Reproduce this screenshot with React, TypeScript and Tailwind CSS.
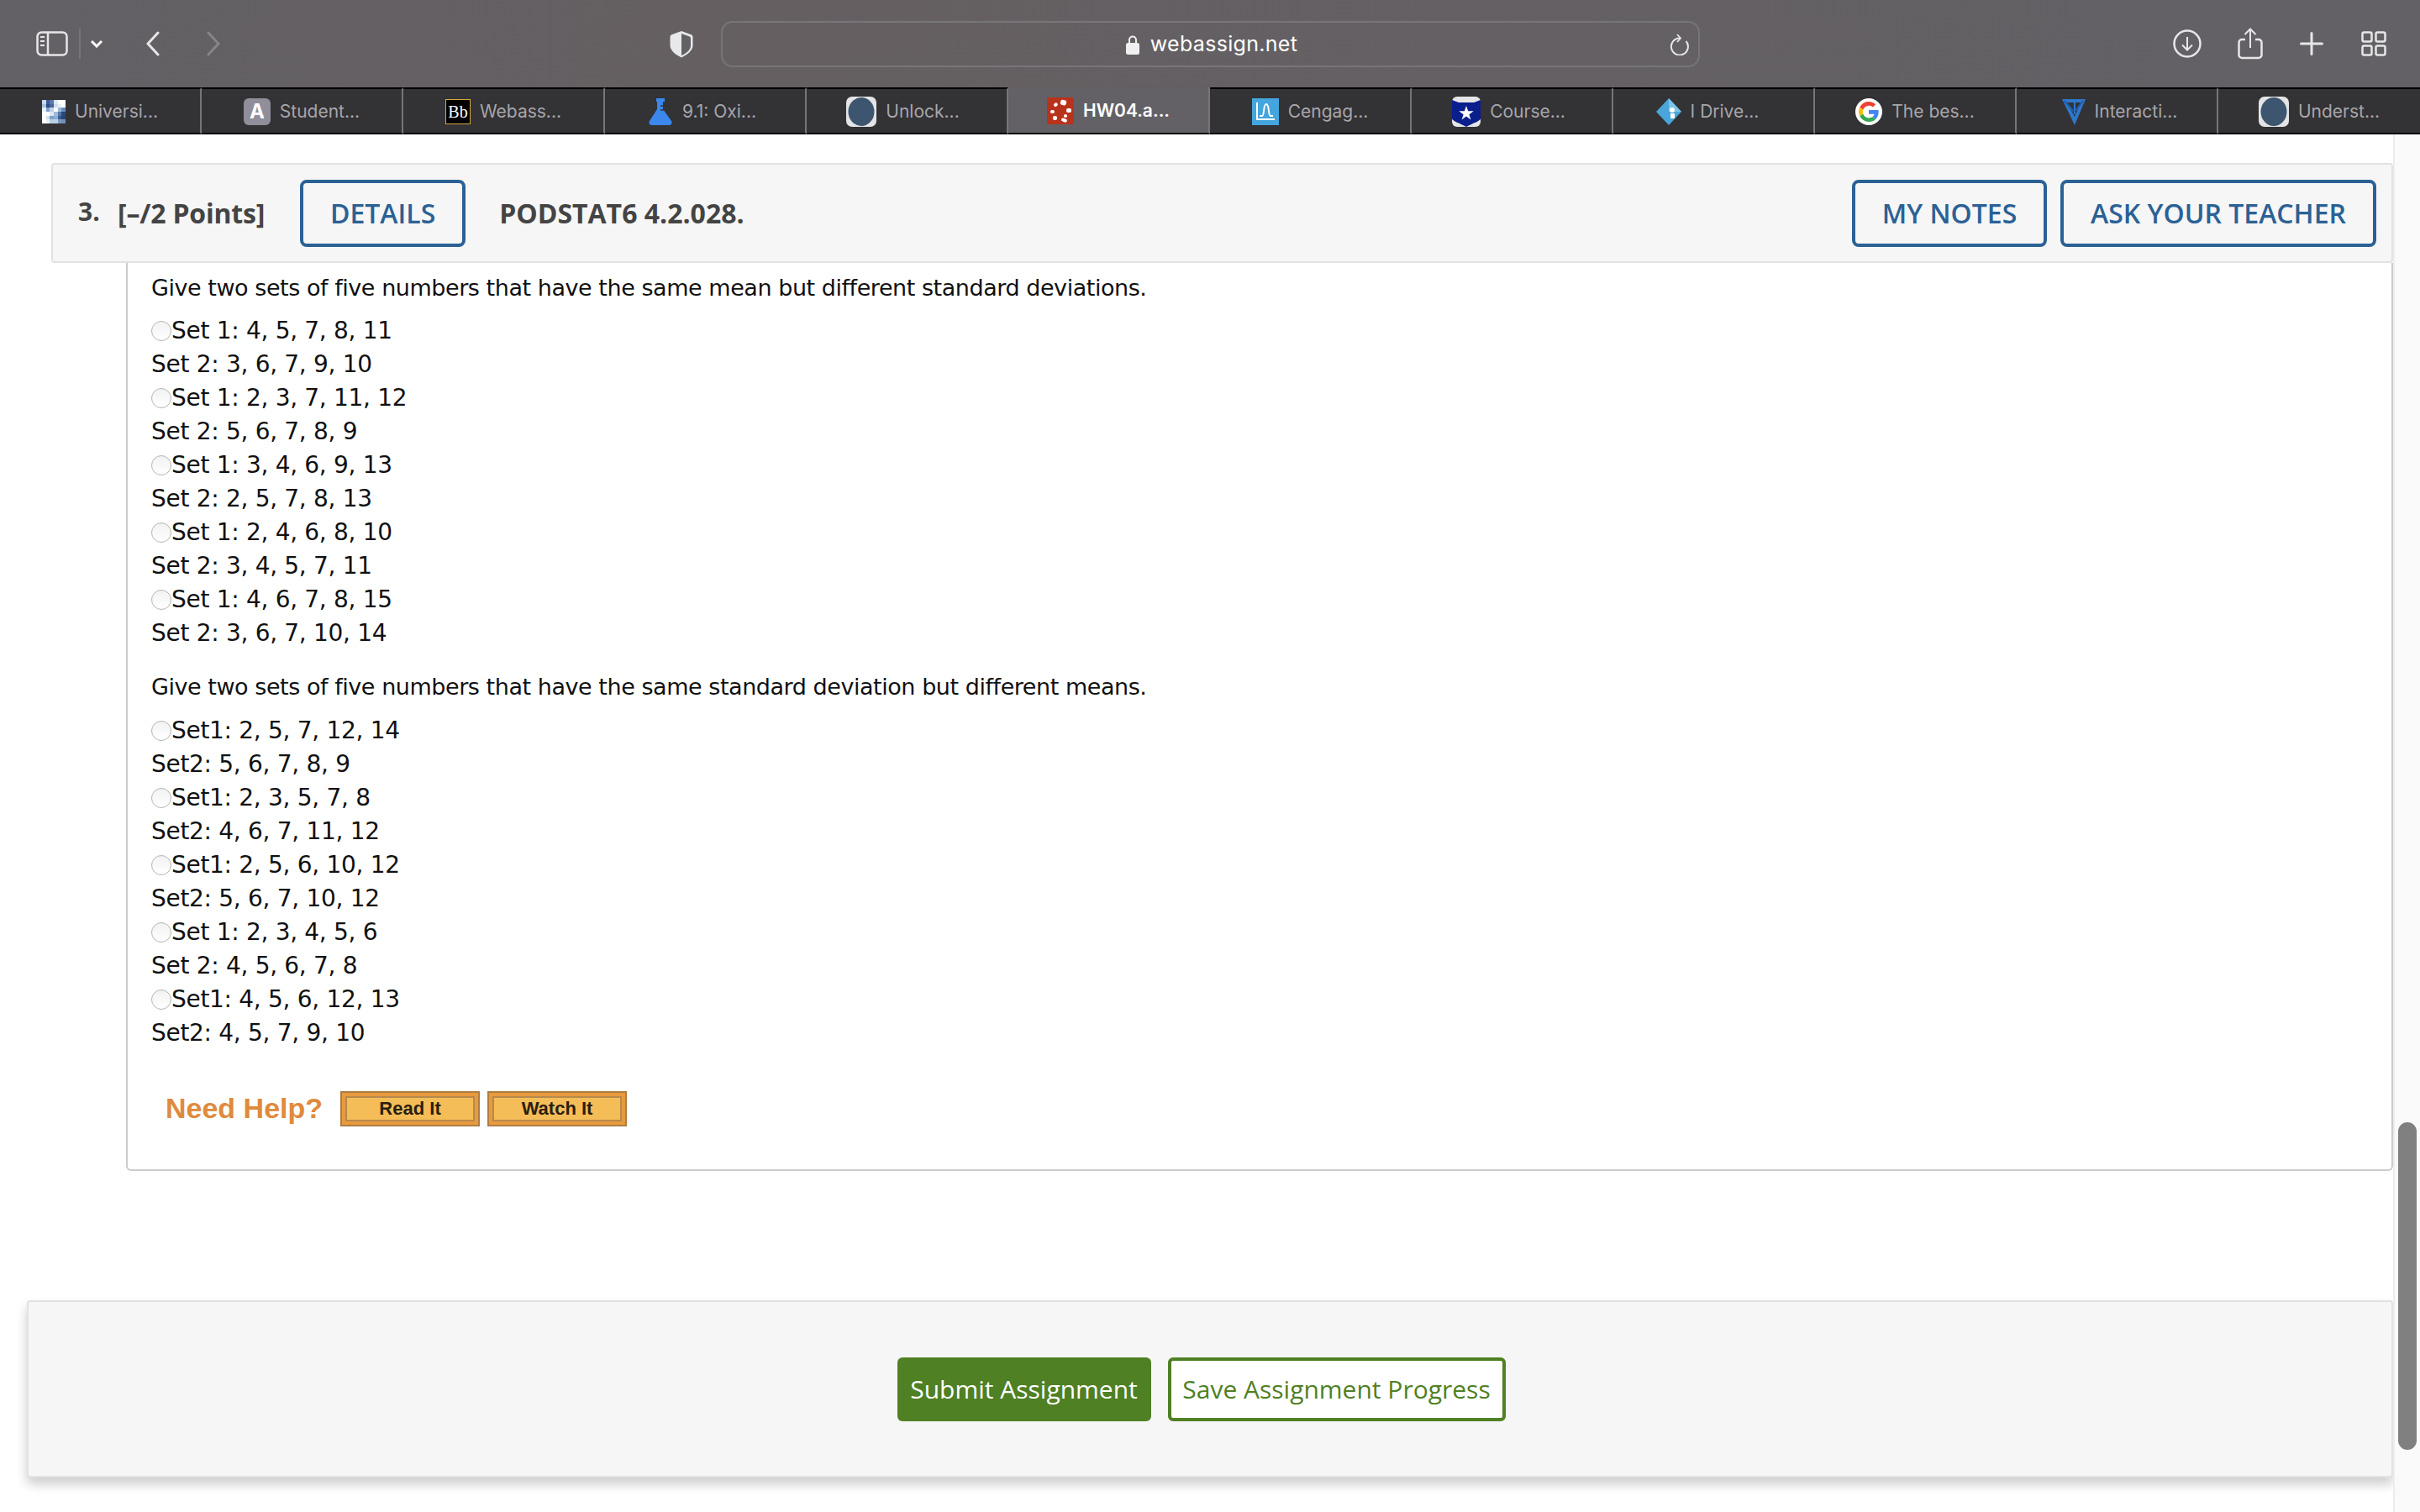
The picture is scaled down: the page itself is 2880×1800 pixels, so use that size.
const set1 = [
  ["Set 1: 4, 5, 7, 8, 11", "Set 2: 3, 6, 7, 9, 10"],
  ["Set 1: 2, 3, 7, 11, 12", "Set 2: 5, 6, 7, 8, 9"],
  ["Set 1: 3, 4, 6, 9, 13", "Set 2: 2, 5, 7, 8, 13"],
  ["Set 1: 2, 4, 6, 8, 10", "Set 2: 3, 4, 5, 7, 11"],
  ["Set 1: 4, 6, 7, 8, 15", "Set 2: 3, 6, 7, 10, 14"],
];

const set2 = [
  ["Set1: 2, 5, 7, 12, 14", "Set2: 5, 6, 7, 8, 9"],
  ["Set1: 2, 3, 5, 7, 8", "Set2: 4, 6, 7, 11, 12"],
  ["Set1: 2, 5, 6, 10, 12", "Set2: 5, 6, 7, 10, 12"],
  ["Set 1: 2, 3, 4, 5, 6", "Set 2: 4, 5, 6, 7, 8"],
  ["Set1: 4, 5, 6, 12, 13", "Set2: 4, 5, 7, 9, 10"],
];

function Options({ rows }: { rows: string[][] }) {
  return (
    <div className="leading-[40px] tracking-[-0.3px]">
      {rows.map((r) => (
        <div key={r[0]}>
          <div className="flex items-center">
            <span className="w-6 h-6 rounded-full border border-[#b5b5b5] bg-gradient-to-b from-[#f2f2f2] to-white" />
            <span>{r[0]}</span>
          </div>
          <div>{r[1]}</div>
        </div>
      ))}
    </div>
  );
}

function DarkCircleIcon() {
  return (
    <svg width="36" height="36" viewBox="0 0 36 36">
      <rect width="36" height="36" rx="7" fill="#e4e4e4" />
      <ellipse cx="18" cy="18" rx="15.5" ry="17" fill="#3d556e" />
    </svg>
  );
}

const pixels = [
  "#c8d8ec #3d5c94 #5a78ac #dfe8f3 #fff #fff",
  "#a8c0dc #2e4a80 #46689e #cfdcee #e8eff7 #fff",
  "#e8f0f8 #7fa0c8 #c0d2e8 #fff #9ab8d8 #6a8cb8",
  "#fff #fff #dce8f4 #a0bcd8 #5478a8 #2c4878",
  "#fff #cfe0f0 #7ca4d0 #8cb0d4 #3a5c90 #2a4474",
  "#fff #e8f0f8 #b8d0e8 #bcd0e6 #7898c0 #7090bc",
];

function UniIcon() {
  return (
    <svg width="28" height="28" viewBox="0 0 6 6" shapeRendering="crispEdges">
      {pixels.map((row, y) =>
        row.split(" ").map((c, x) => (
          <rect key={`${x}-${y}`} x={x} y={y} width="1.02" height="1.02" fill={c} />
        ))
      )}
    </svg>
  );
}

function LetterIcon() {
  return (
    <span className="w-8 h-8 rounded-[6px] bg-[#8f8e9a] text-white flex items-center justify-center text-[24px] font-bold font-['Inter']">
      A
    </span>
  );
}

function BbIcon() {
  return (
    <span className="w-[30px] h-[30px] bg-black border border-[#d8a93c] text-white flex items-center justify-center text-[20px] leading-none font-['Liberation_Serif']">
      Bb
    </span>
  );
}

function FlaskIcon() {
  return (
    <svg width="30" height="32" viewBox="0 0 30 32">
      <path d="M10 0h10v4h-2v9l10 14c1.500 2.500 0 5-3 5H5c-3 0-4.500-2.500-3-5l9-14V4h-1z" fill="#3b87ee" />
      <path d="M15 9h3M15 14h4" stroke="#333235" strokeWidth="1.500" />
    </svg>
  );
}

function RedIcon() {
  return (
    <svg width="32" height="32" viewBox="0 0 32 32">
      <rect width="32" height="32" fill="#b9321b" />
      <g fill="#fff">
        <rect x="16" y="3" width="7" height="6" rx="2" transform="rotate(15 19 6)" />
        <rect x="8" y="7" width="5" height="4" rx="2" transform="rotate(-40 10 9)" />
        <rect x="4" y="15" width="5" height="4" rx="2" />
        <rect x="23" y="13" width="6" height="5" rx="2" />
        <rect x="20" y="20" width="4" height="4" rx="2" />
        <rect x="7" y="22" width="5" height="5" rx="2" />
        <rect x="17" y="25" width="7" height="4" rx="2" transform="rotate(20 20 27)" />
      </g>
    </svg>
  );
}

function CengageIcon() {
  return (
    <svg width="32" height="32" viewBox="0 0 32 32">
      <rect width="32" height="32" fill="#45a5de" />
      <path d="M6 5v20h21" fill="none" stroke="#fff" strokeWidth="2" />
      <path d="M9 21h3c3 0 1-14 5-14s2 14 5 14h3" fill="none" stroke="#fff" strokeWidth="2" />
    </svg>
  );
}

function CourseIcon() {
  return (
    <svg width="34" height="36" viewBox="0 0 34 36">
      <rect width="34" height="36" rx="6" fill="#e6e6e6" />
      <path d="M0 4l8 3h18l8-3v22c0 3-10 6-17 10C10 32 0 29 0 26z" fill="#0a1e8c" />
      <path d="M17 11l2.200 6.300h6.500l-5.300 3.900 2 6.300-5.400-3.900-5.400 3.900 2-6.300-5.300-3.900h6.500z" fill="#fff" />
    </svg>
  );
}

function DriveIcon() {
  return (
    <svg width="30" height="32" viewBox="0 0 30 32">
      <path d="M15 0l15 16-15 16L0 16z" fill="#4aa6d8" />
      <path d="M15 0l15 16H15z" fill="#7cc4e8" />
      <circle cx="19" cy="14" r="3" fill="#fff" />
      <rect x="17" y="18" width="5" height="6" fill="#fff" />
    </svg>
  );
}

function GoogleIcon() {
  return (
    <svg width="32" height="32" viewBox="0 0 48 48">
      <circle cx="24" cy="24" r="24" fill="#fff" />
      <path fill="#ea4335" d="M24 13c3 0 5.400 1 7.300 2.800l5-5C33.300 8 29 6 24 6 17 6 11 10 8 16l5.900 4.500C15.300 16.200 19.300 13 24 13z" />
      <path fill="#4285f4" d="M41.500 24.500c0-1.200-.1-2.400-.3-3.500H24v7h9.900c-.4 2.300-1.700 4.200-3.700 5.500l5.700 4.400c3.400-3.100 5.600-7.700 5.600-13.400z" />
      <path fill="#fbbc05" d="M13.900 27.500c-.4-1.100-.6-2.300-.6-3.500s.2-2.400.6-3.500L8 16c-1.300 2.400-2 5.100-2 8s.7 5.600 2 8z" />
      <path fill="#34a853" d="M24 42c4.900 0 9-1.600 11.900-4.100l-5.700-4.400c-1.600 1.100-3.700 1.700-6.200 1.700-4.700 0-8.700-3.200-10.100-7.500L8 32c3 6 9 10 16 10z" />
    </svg>
  );
}

function InteractIcon() {
  return (
    <svg width="28" height="32" viewBox="0 0 28 32">
      <path d="M0 1h28L15 32z" fill="#2f77c9" />
      <path d="M6 5h16L15 22z" fill="#333235" />
      <path d="M14 5h2v14h-2z" fill="#2f77c9" />
      <path d="M3 3l11 13M25 3L15 16" stroke="#1f5ba6" strokeWidth="2" />
    </svg>
  );
}

const tabs = [
  { label: "Universi...", icon: <UniIcon />, nudge: "" },
  { label: "Student...", icon: <LetterIcon />, nudge: "" },
  { label: "Webass...", icon: <BbIcon />, nudge: "" },
  { label: "9.1: Oxi...", icon: <FlaskIcon />, nudge: "pr-[7px]" },
  { label: "Unlock...", icon: <DarkCircleIcon />, nudge: "pr-[9px]" },
  { label: "HW04.a...", icon: <RedIcon />, active: true, nudge: "" },
  { label: "Cengag...", icon: <CengageIcon />, nudge: "" },
  { label: "Course...", icon: <CourseIcon />, nudge: "pr-[7px]" },
  { label: "I Drive...", icon: <DriveIcon />, nudge: "pr-[14px]" },
  { label: "The bes...", icon: <GoogleIcon />, nudge: "" },
  { label: "Interacti...", icon: <InteractIcon />, nudge: "pl-[7px]" },
  { label: "Underst...", icon: <DarkCircleIcon />, nudge: "" },
];

function Toolbar() {
  return (
    <div className="h-[104px] flex items-center pl-[43px] bg-gradient-to-r from-[#636166] via-[#655f61] via-30% to-[#636166] text-[#e6e6e8]">
      <svg width="38" height="30" viewBox="0 0 38 30" fill="none" stroke="currentColor" strokeWidth="2.500">
        <rect x="1.500" y="1.500" width="35" height="27" rx="5" />
        <path d="M14 1.500v27" />
        <path d="M5 7h5M5 12h5M5 17h5" strokeWidth="2" />
      </svg>
      <div className="ml-[13px] w-[2px] h-9 bg-[#77757a]" />
      <svg className="ml-[12px]" width="14" height="10" viewBox="0 0 14 10" fill="none" stroke="#fff" strokeWidth="3">
        <path d="M1 2l6 6 6-6" />
      </svg>
      <svg className="ml-[52px]" width="16" height="30" viewBox="0 0 16 30" fill="none" stroke="currentColor" strokeWidth="3" strokeLinecap="round">
        <path d="M14 2L2 15l12 13" />
      </svg>
      <svg className="ml-[56px]" width="16" height="30" viewBox="0 0 16 30" fill="none" stroke="#86848a" strokeWidth="3" strokeLinecap="round">
        <path d="M2 2l12 13L2 28" />
      </svg>
      <svg className="ml-[535px]" width="28" height="33" viewBox="0 0 28 33">
        <path d="M14 1L25 5c2 .7 2.500 1.500 2.500 4v9c0 6-6 11-13.500 14.500C6.500 29 .5 24 .5 18V9c0-2.500.5-3.300 2.500-4z" fill="#e8e8ea" />
        <path d="M14 4l9 3.200c1.500.6 2 1 2 3v8c0 4.800-4.500 9-11 11.800z" fill="#636166" />
      </svg>
      <div className="ml-[33px] w-[1165px] h-[55px] rounded-[14px] border-2 border-[#77757a] flex items-center justify-center pl-[3px] pt-[2px] relative">
        <svg className="mr-[13px]" width="16" height="24" viewBox="0 0 16 24">
          <path d="M4 11V6.500a4 4 0 0 1 8 0V11" fill="none" stroke="#f0f0f0" strokeWidth="2" />
          <rect y="10" width="16" height="14" rx="2.500" fill="#f0f0f0" />
        </svg>
        <span className="font-['Inter'] text-[25px] text-white tracking-[0.3px]">webassign.net</span>
        <svg className="absolute right-[10px] top-[13px]" width="24" height="26" viewBox="0 0 24 26" fill="none" stroke="#e6e6e8" strokeWidth="2">
          <path d="M19.500 9A10 10 0 1 1 12 5.500" />
          <path d="M9 1l4 4.500L9 10" strokeWidth="1.800" />
        </svg>
      </div>
      <svg className="ml-[563px]" width="34" height="34" viewBox="0 0 34 34" fill="none" stroke="currentColor" strokeWidth="2.500">
        <circle cx="17" cy="17" r="15.500" />
        <path d="M17 9v15M11 18.500l6 6 6-6" strokeWidth="2" />
      </svg>
      <svg className="ml-[43px]" width="30" height="38" viewBox="0 0 30 38" fill="none" stroke="currentColor" strokeWidth="2.500">
        <path d="M9 14H5a3.500 3.500 0 0 0-3.500 3.500v15A3.500 3.500 0 0 0 5 36h20a3.500 3.500 0 0 0 3.500-3.500v-15A3.500 3.500 0 0 0 25 14h-4" />
        <path d="M15 24V2M8.500 8L15 1.500 21.500 8" strokeWidth="2" />
      </svg>
      <svg className="ml-[44px]" width="28" height="28" viewBox="0 0 28 28" stroke="currentColor" strokeWidth="3" strokeLinecap="round">
        <path d="M14 1.500v25M1.500 14h25" />
      </svg>
      <svg className="ml-[45px]" width="30" height="30" viewBox="0 0 30 30" fill="none" stroke="currentColor" strokeWidth="2.500">
        <rect x="1.500" y="1.500" width="11" height="11" rx="2" />
        <rect x="17.500" y="1.500" width="11" height="11" rx="2" />
        <rect x="1.500" y="17.500" width="11" height="11" rx="2" />
        <rect x="17.500" y="17.500" width="11" height="11" rx="2" />
      </svg>
    </div>
  );
}

function TabBar() {
  return (
    <div className="grid grid-cols-12 h-[56px] bg-[#333235] font-['Inter'] text-[21px]">
      {tabs.map((t, i) => (
        <div
          key={i}
          className={
            (t.active
              ? "flex items-center justify-center gap-[11px] pt-[2px] bg-[#636166] text-white font-semibold border-b-2 border-b-black border-r-2 border-r-[#77757a] "
              : "flex items-center justify-center gap-[11px] pt-[1px] text-[#a7a6aa] border-t-2 border-t-black border-b-2 border-b-black border-r-2 border-r-[#77757a] last:border-r-0 ") +
            t.nudge
          }
        >
          {t.icon}
          <span>{t.label}</span>
        </div>
      ))}
    </div>
  );
}

function OutlineButton({ label, className }: { label: string; className: string }) {
  return (
    <button
      className={
        "h-20 rounded-[8px] border-4 border-[#2b6195] text-[#2b6195] text-[32px] font-semibold flex items-center justify-center " +
        className
      }
    >
      {label}
    </button>
  );
}

function HelpButton({ label }: { label: string }) {
  return (
    <div className="w-[166px] h-[42px] border-2 border-[#ad7d42] bg-[#e99a3d] p-[4px]">
      <div className="h-full border-2 border-[#b58a4c] bg-[#f5bd58] flex items-center justify-center text-[22px] font-bold text-[#2a2010] font-['Liberation_Sans']">
        {label}
      </div>
    </div>
  );
}

export default function App() {
  return (
    <div className="w-full h-screen overflow-hidden bg-white flex flex-col">
      <Toolbar />
      <TabBar />
      <div className="flex flex-1 min-h-0">
        <main className="flex-1 flex flex-col pt-[34px] pl-[61px]">
          <div className="h-[119px] flex items-center justify-between pl-[30px] pr-[18px] bg-[#f6f6f6] border-2 border-[#e2e2e2] rounded-[4px] font-['Open_Sans']">
            <div className="flex items-center">
              <span className="text-[30px] font-bold text-[#444] w-[47px] -mt-1">3.</span>
              <span className="text-[32px] font-bold text-[#444] tracking-[-0.2px]">[–/2 Points]</span>
              <OutlineButton label="DETAILS" className="w-[197px] ml-[42px]" />
              <span className="ml-[40px] text-[32px] font-bold text-[#444]">PODSTAT6 4.2.028.</span>
            </div>
            <div className="flex gap-4">
              <OutlineButton label="MY NOTES" className="w-[232px]" />
              <OutlineButton label="ASK YOUR TEACHER" className="w-[376px]" />
            </div>
          </div>
          <div className="ml-[89px] h-[1081px] border-2 border-t-0 border-[#cccccc] rounded-b-[6px] pt-[10px] pl-[28px] font-['DejaVu_Sans'] text-[28px] text-[#111]">
            <p className="text-[27px] tracking-[-0.45px] leading-[40px] mb-[11px]">
              Give two sets of five numbers that have the same mean but different standard deviations.
            </p>
            <Options rows={set1} />
            <p className="text-[27px] tracking-[-0.45px] leading-[40px] mt-[24px] mb-[12px]">
              Give two sets of five numbers that have the same standard deviation but different means.
            </p>
            <Options rows={set2} />
            <div className="flex items-center mt-[44px] ml-[17px] font-['Liberation_Sans']">
              <span className="text-[34px] font-bold text-[#e08a3c] mr-[21px]">Need Help?</span>
              <div className="flex gap-[9px]">
                <HelpButton label="Read It" />
                <HelpButton label="Watch It" />
              </div>
            </div>
          </div>
          <div className="-ml-[29px] mt-[154px] h-[211px] flex items-center justify-center gap-5 pr-[21px] bg-[#f6f6f6] border-2 border-[#e2e2e2] rounded-[4px] shadow-[0_8px_14px_rgba(0,0,0,0.2)] font-['Open_Sans'] text-[30px]">
            <button className="w-[302px] h-[76px] rounded-[6px] bg-[#4f8024] text-white">Submit Assignment</button>
            <button className="w-[402px] h-[76px] rounded-[6px] bg-white border-4 border-[#4f8024] text-[#4f8024]">
              Save Assignment Progress
            </button>
          </div>
        </main>
        <div className="w-8 shrink-0 bg-[#fafafa] border-l-2 border-[#ececec] pt-[1176px] pl-[4px]">
          <div className="w-[22px] h-[390px] rounded-full bg-[#808080]" />
        </div>
      </div>
    </div>
  );
}
